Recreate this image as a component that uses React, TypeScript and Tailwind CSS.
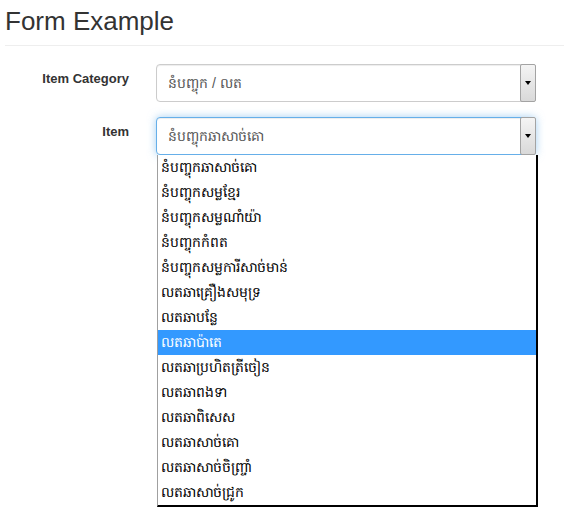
const items = [
  'នំបញ្ចុកឆាសាច់គោ',
  'នំបញ្ចុកសម្លខ្មែរ',
  'នំបញ្ចុកសម្លណាំយ៉ា',
  'នំបញ្ចុកកំពត',
  'នំបញ្ចុកសម្លការីសាច់មាន់',
  'លតឆាគ្រឿងសមុទ្រ',
  'លតឆាបន្លែ',
  'លតឆាប៉ាតេ',
  'លតឆាប្រហិតត្រីចៀន',
  'លតឆាពងទា',
  'លតឆាពិសេស',
  'លតឆាសាច់គោ',
  'លតឆាសាច់ចិញ្ច្រាំ',
  'លតឆាសាច់ជ្រូក',
]

const selected = 'លតឆាប៉ាតេ'

function ArrowButton() {
  return (
    <div className="-my-px -mr-px w-[16px] flex items-center justify-center rounded-[2px] border border-[#a3a3a3] bg-gradient-to-b from-[#f4f4f4] to-[#d9d9d9]">
      <div className="w-0 h-0 border-l-[3.5px] border-r-[3.5px] border-t-[4px] border-l-transparent border-r-transparent border-t-black" />
    </div>
  )
}

function SelectBox({ value, focused }: { value: string; focused?: boolean }) {
  return (
    <div
      className={
        focused
          ? 'h-[38px] w-[380px] flex items-stretch rounded-[4px] border border-[#66afe9] bg-white shadow-[inset_0_1px_1px_rgba(0,0,0,0.075),0_0_8px_rgba(102,175,233,0.6)]'
          : 'h-[38px] w-[380px] flex items-stretch rounded-[4px] border border-[#cccccc] bg-white shadow-[inset_0_1px_1px_rgba(0,0,0,0.075)]'
      }
    >
      <div className="flex-1 flex items-center pl-[11px] text-[14px] text-[#555555]">{value}</div>
      <ArrowButton />
    </div>
  )
}

function FormRow({ label, children }: { label: string; children: React.ReactNode }) {
  return (
    <div className="flex items-start">
      <label className="w-[129px] shrink-0 pt-[5px] text-right text-[13px] leading-[20px] font-bold text-[#333333]">
        {label}
      </label>
      <div className="ml-[27px]">{children}</div>
    </div>
  )
}

export default function App() {
  return (
    <div className="w-[564px] h-[520px] bg-white overflow-hidden font-['Liberation_Sans','Noto_Sans',sans-serif]">
      <h3 className="pl-[5px] pt-[7px] text-[26px] leading-[28px] font-normal text-[#333333]">Form Example</h3>
      <div className="ml-[5px] mt-[10px] h-px bg-[#eeeeee]" />

      <div className="mt-[18px] flex flex-col gap-[15px]">
        <FormRow label="Item Category">
          <SelectBox value="នំបញ្ចុក / លត" />
        </FormRow>
        <FormRow label="Item">
          <SelectBox value={items[0]} focused />
          <div className="ml-px w-[381px] border-l border-l-[#a0a0a0] border-r-2 border-r-black border-b-2 border-b-black bg-white">
            {items.map((it) => (
              <div
                key={it}
                className={
                  it === selected
                    ? 'h-[25px] flex items-center pl-[3px] text-[14px] bg-[#3399ff] text-white'
                    : 'h-[25px] flex items-center pl-[3px] text-[14px] text-black'
                }
              >
                {it}
              </div>
            ))}
          </div>
        </FormRow>
      </div>
    </div>
  )
}
